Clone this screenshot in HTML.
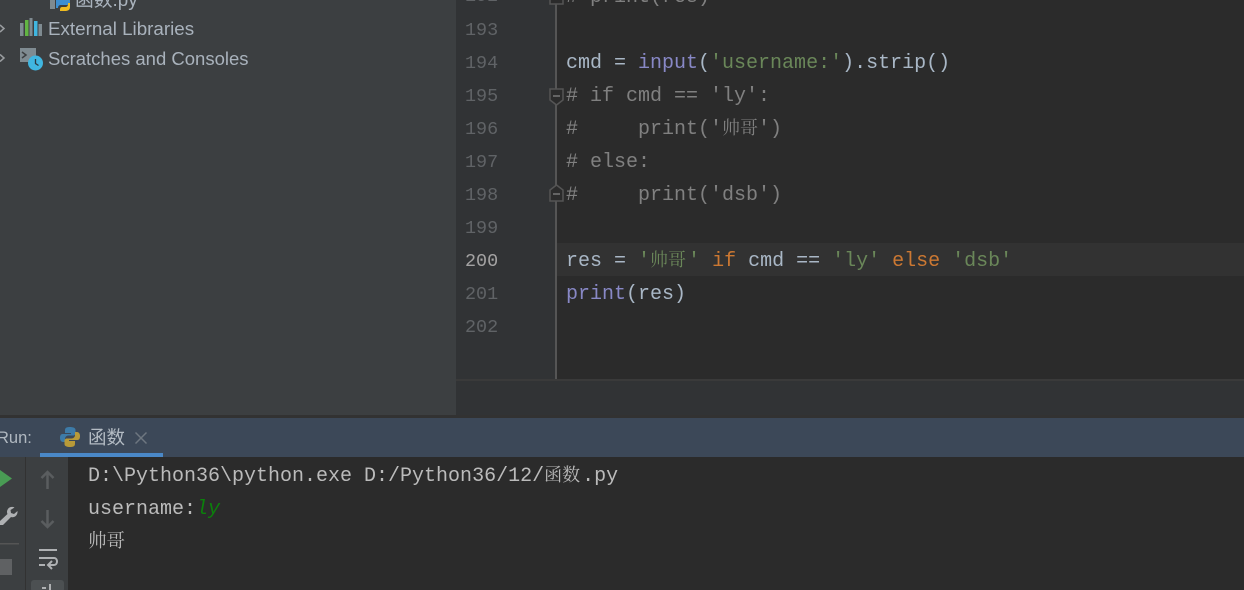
<!DOCTYPE html>
<html><head><meta charset="utf-8"><style>
html,body{margin:0;padding:0;width:1244px;height:590px;overflow:hidden;background:#3c3f41}
.a{position:absolute}
.m{position:absolute;font-family:"Liberation Mono","Noto Serif CJK SC",monospace;font-size:20px;line-height:33px;height:33px;white-space:pre;color:#a9b7c6}
.c{left:566px}
.n{left:465px;color:#606366;font-size:18.4px}
.g{color:#6a8759}.o{color:#cc7832}.p{color:#8888c6}.k{color:#808080}
.cj{display:inline-block;width:36px;font-size:18px;line-height:0;text-align:left;font-family:"Noto Serif CJK SC","WenQuanYi Zen Hei",serif}
.s{position:absolute;font-family:"Liberation Sans","Noto Sans CJK SC",sans-serif;font-size:18.8px;line-height:24px;color:#a9b2bc;white-space:pre}
</style></head><body>
<div class="a" style="left:456px;top:0;width:788px;height:380px;background:#2b2b2b"></div>
<div class="a" style="left:456px;top:0;width:100px;height:380px;background:#313335"></div>
<div class="a" style="left:557px;top:243px;width:687px;height:33px;background:#323232"></div>
<div class="a" style="left:555px;top:0;width:2px;height:379px;background:#555"></div>
<div class="a" style="left:456px;top:379px;width:788px;height:36px;background:#313335;border-top:2px solid #3a3a3a;box-sizing:border-box"></div>
<div class="a" style="left:0;top:415px;width:1244px;height:3px;background:#323232"></div>
<div class="a" style="left:0;top:418px;width:1244px;height:39px;background:#3c4858"></div>
<div class="a" style="left:40px;top:453px;width:123px;height:4px;background:#4a88c7"></div>
<div class="a" style="left:68px;top:457px;width:1176px;height:133px;background:#2b2b2b"></div>
<div class="a" style="left:25px;top:457px;width:1px;height:133px;background:#323232"></div>

<svg class="a" style="left:0;top:0" width="72" height="80" viewBox="0 0 72 80">
<path d="M50 0h5v9h-5z" fill="#7f8b91"/>
<path d="M56 0h14v2c0 1-1 3-3 3h-6c-2 0-3 1-3 3h-2z" fill="#3d8fd1"/>
<path d="M60 11h5c3 0 5-1 5-4V3h-2v1c0 2-1 3-3 3h-3c-2 0-2 2-2 4z" fill="#f0bc20"/>
<path d="M0 25l4 3.500-4 3.500" fill="none" stroke="#9a9da0" stroke-width="1.500"/>
<path d="M0 54.500l4 3.500-4 3.500" fill="none" stroke="#9a9da0" stroke-width="1.500"/>
<rect x="20" y="23" width="3.500" height="13" fill="#7f8b91"/>
<rect x="25" y="20" width="3.500" height="16" fill="#62b543"/>
<rect x="29.500" y="18" width="3" height="18" fill="#7f8b91"/>
<rect x="34" y="21" width="3.500" height="15" fill="#40b6e0"/>
<rect x="38.500" y="24" width="3.500" height="12" fill="#7f8b91"/>
<rect x="20" y="48" width="16" height="14" fill="#7f8b91"/>
<path d="M22 52l4 3-4 3" fill="none" stroke="#3c3f41" stroke-width="1.500"/>
<circle cx="35.500" cy="63" r="7.500" fill="#40b6e0"/>
<path d="M35.500 59v4.500l3 2" fill="none" stroke="#2b3a42" stroke-width="1.300"/>
</svg>
<div class="s" style="left:75px;top:-12px">函数.py</div>
<div class="s" style="left:48px;top:17px">External Libraries</div>
<div class="s" style="left:48px;top:47px;font-size:18.5px">Scratches and Consoles</div>

<div class="m n" style="top:-20px">192</div>
<div class="m n" style="top:14px">193</div>
<div class="m n" style="top:47px">194</div>
<div class="m n" style="top:80px">195</div>
<div class="m n" style="top:113px">196</div>
<div class="m n" style="top:146px">197</div>
<div class="m n" style="top:179px">198</div>
<div class="m n" style="top:212px">199</div>
<div class="m n" style="top:245px;color:#a4a3a3">200</div>
<div class="m n" style="top:278px">201</div>
<div class="m n" style="top:311px">202</div>

<div class="m c k" style="top:-19px"># print(res)</div>
<div class="m c" style="top:47px">cmd = <span class="p">input</span>(<span class="g">'username:'</span>).strip()</div>
<div class="m c k" style="top:80px"># if cmd == 'ly':</div>
<div class="m c k" style="top:113px">#     print('<span class="cj">帅哥</span>')</div>
<div class="m c k" style="top:146px"># else:</div>
<div class="m c k" style="top:179px">#     print('dsb')</div>
<div class="m c" style="top:245px">res = <span class="g">'<span class="cj" style="width:38px">帅哥</span>'</span> <span class="o">if</span> cmd == <span class="g">'ly'</span> <span class="o">else</span> <span class="g">'dsb'</span></div>
<div class="m c" style="top:278px"><span class="p">print</span>(res)</div>

<svg class="a" style="left:549px;top:0" width="16" height="210" viewBox="0 0 16 210">
<path d="M1 0v4h13v-4" fill="#2b2b2b" stroke="#555" stroke-width="1.500"/>
<path d="M1 89h13v11l-6.500 5-6.500-5z" fill="#2b2b2b" stroke="#555" stroke-width="1.500"/>
<path d="M4 96h7" stroke="#777" stroke-width="1.500"/>
<path d="M1 201h13v-11l-6.500-5-6.500 5z" fill="#2b2b2b" stroke="#555" stroke-width="1.500"/>
<path d="M4 194h7" stroke="#777" stroke-width="1.500"/>
</svg>

<div class="s" style="left:-3px;top:426px;font-size:16.500px;color:#b0b8c0">Run:</div>
<svg class="a" style="left:59px;top:426px" width="22" height="22" viewBox="0 0 22 22">
<path d="M10.500 1C6 1 6 3 6 5v2h6v1H3.500C1.500 8 1 10 1 12s1 4 3 4h2v-3c0-2 1.500-3.500 3.500-3.500H14c1.500 0 2.500-1 2.500-2.500V4c0-2-2-3-6-3z" fill="#3d7ba8"/>
<path d="M11.500 21c4.500 0 4.500-2 4.500-4v-2h-6v-1h8.500c2 0 2.500-2 2.500-4s-1-4-3-4h-2v3c0 2-1.500 3.500-3.500 3.500H8c-1.500 0-2.500 1-2.500 2.500V18c0 2 2 3 6 3z" fill="#b89a38"/>
</svg>
<div class="s" style="left:88px;top:426px;font-size:18.500px;color:#b4bcc4">函数</div>
<svg class="a" style="left:134px;top:431px" width="14" height="14"><path d="M1.500 1.500l11 11M12.500 1.500l-11 11" stroke="#6e7780" stroke-width="1.500"/></svg>

<svg class="a" style="left:0;top:457px" width="68" height="133" viewBox="0 0 68 133">
<path d="M0 13l12 8.500L0 30z" fill="#499c54"/>
<path d="M14.500 50.500c-3-1.500-7 0-7.500 4 0 1 0 1.500.5 2.500L0 64v4h3l8-8c3 1 6-1 6.500-4.500v-1.500l-3.500 3-3-1-.5-3z" fill="#afb1b3"/>
<rect x="0" y="86" width="19" height="1.500" fill="#555"/>
<rect x="0" y="102" width="12" height="16" fill="#5f6163"/>
<path d="M47.500 15v17M41.500 21l6-6 6 6" fill="none" stroke="#5a5d5f" stroke-width="2.500"/>
<path d="M47.500 53v17M41.500 64l6 6 6-6" fill="none" stroke="#5a5d5f" stroke-width="2.500"/>
<path d="M39 93h18M39 101h15c4 0 4 7 0 7h-5M52 104l-4 4 4 4M39 108h6" fill="none" stroke="#afb1b3" stroke-width="2"/>
<rect x="31" y="123" width="33" height="12" rx="3" fill="#4c5052"/>
<path d="M42 131h4M50 127v6" stroke="#afb1b3" stroke-width="2"/>
</svg>

<div class="m" style="left:88px;top:460px;color:#bbb">D:\Python36\python.exe D:/Python36/12/<span class="cj" style="width:38px">函数</span>.py</div>
<div class="m" style="left:88px;top:493px;color:#bbb">username:<span style="color:#0b800b;font-style:italic">ly</span></div>
<div class="m" style="left:88px;top:526px;color:#bbb"><span class="cj" style="width:40px;font-size:18.500px">帅哥</span></div>
</body></html>
